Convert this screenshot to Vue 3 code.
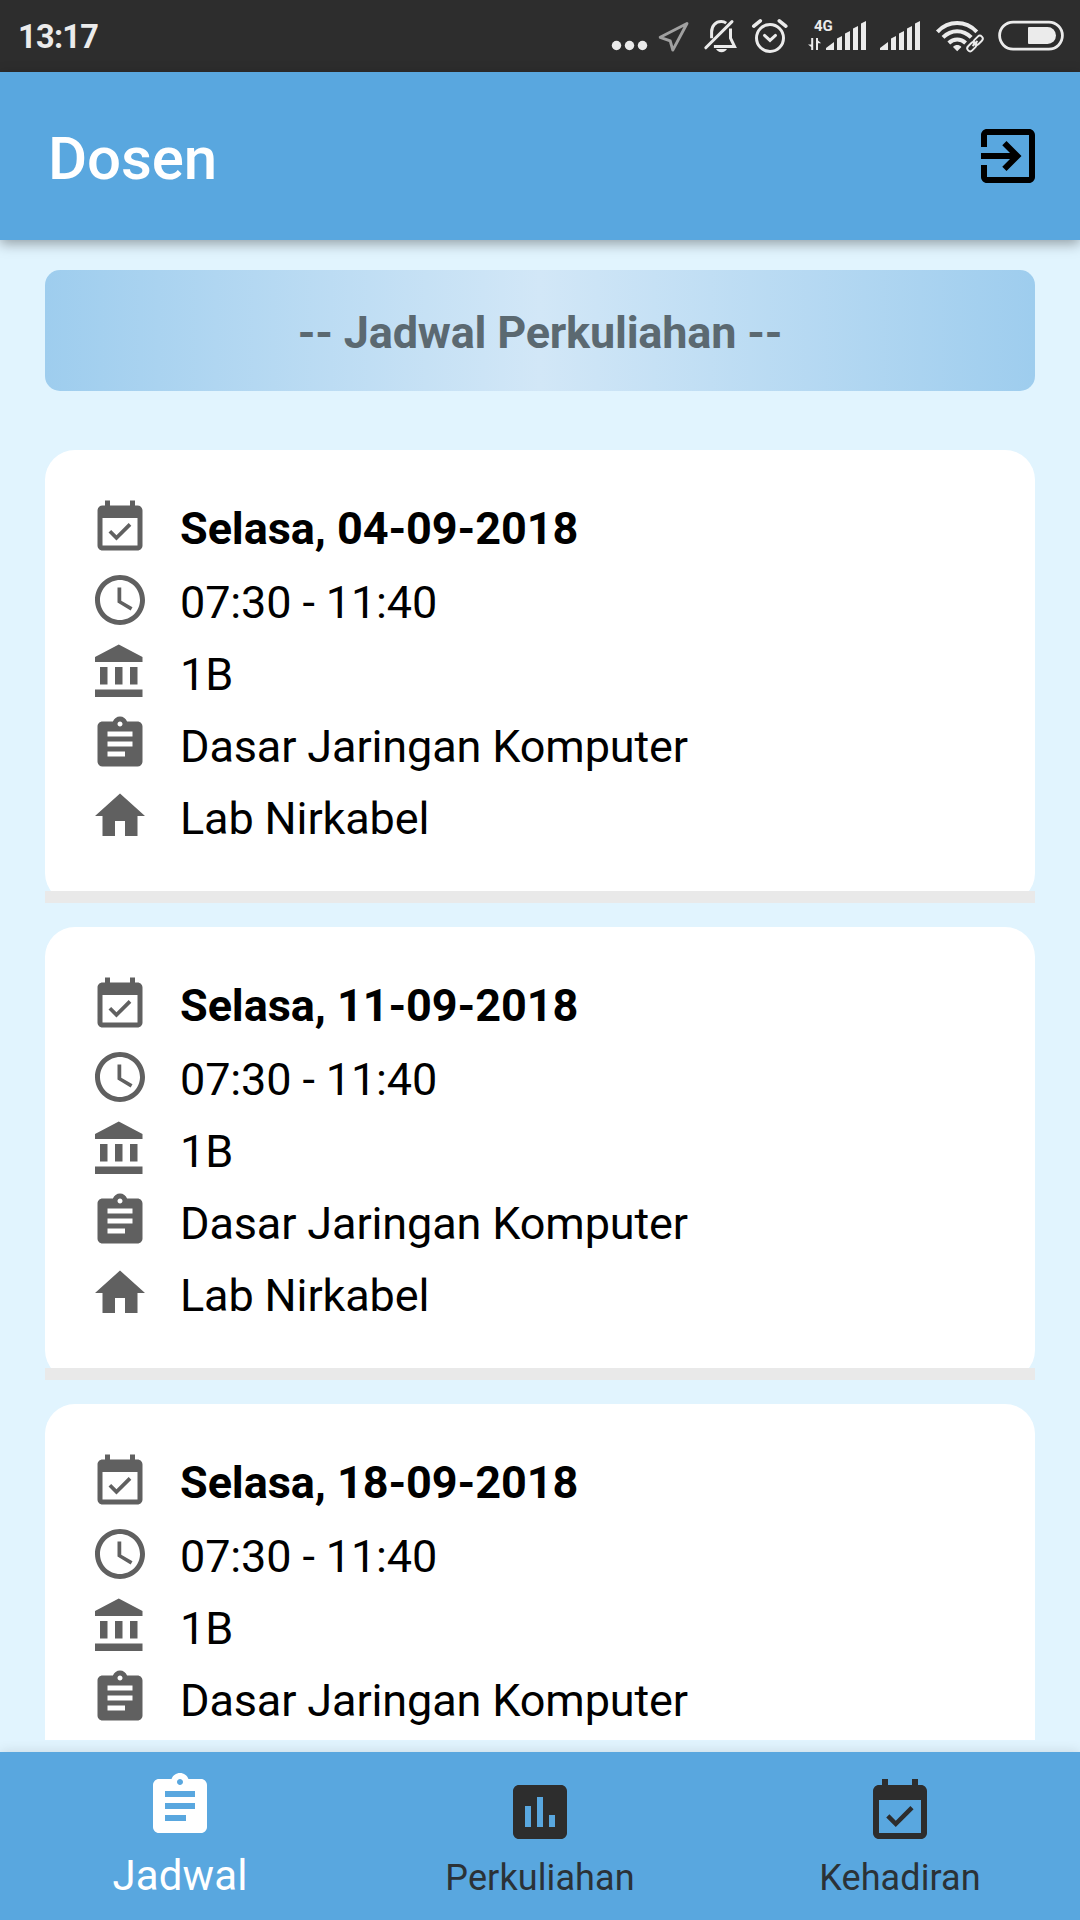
<script setup>
const icons = {
  calendar: 'M16.53 11.06L15.47 10l-4.88 4.88-2.12-2.12-1.06 1.06L10.59 17l5.94-5.94zM19 3h-1V1h-2v2H8V1H6v2H5c-1.11 0-1.99.9-1.99 2L3 19c0 1.1.89 2 2 2h14c1.1 0 2-.9 2-2V5c0-1.1-.9-2-2-2zm0 16H5V8h14v11z',
  clock: 'M11.99 2C6.47 2 2 6.48 2 12s4.47 10 9.99 10C17.52 22 22 17.52 22 12S17.52 2 11.99 2zM12 20c-4.42 0-8-3.58-8-8s3.58-8 8-8 8 3.58 8 8-3.58 8-8 8zm.5-13H11v6l5.25 3.15.75-1.23-4.5-2.67z',
  bank: 'M4 10v7h3v-7H4zm6 0v7h3v-7h-3zM2 22h19v-3H2v3zm14-12v7h3v-7h-3zm-4.5-9L2 6v2h19V6l-9.5-5z',
  clipboard: 'M19 3h-4.18C14.4 1.84 13.3 1 12 1c-1.3 0-2.4.84-2.82 2H5c-1.1 0-2 .9-2 2v14c0 1.1.9 2 2 2h14c1.1 0 2-.9 2-2V5c0-1.1-.9-2-2-2zm-7 0c.55 0 1 .45 1 1s-.45 1-1 1-1-.45-1-1 .45-1 1-1zm2 14H7v-2h7v2zm3-4H7v-2h10v2zm0-4H7V7h10v2z',
  home: 'M10 20v-6h4v6h5v-8h3L12 3 2 12h3v8z',
  chart: 'M19 3H5c-1.1 0-2 .9-2 2v14c0 1.1.9 2 2 2h14c1.1 0 2-.9 2-2V5c0-1.1-.9-2-2-2zM9 17H7v-7h2v7zm4 0h-2V7h2v10zm4 0h-2v-4h2v4z',
  exit: 'M10.09 15.59L11.5 17l5-5-5-5-1.41 1.41L12.67 11H3v2h9.67l-2.58 2.59zM19 3H5c-1.11 0-2 .9-2 2v4h2V5h14v14H5v-4H3v4c0 1.1.89 2 2 2h14c1.1 0 2-.9 2-2V5c0-1.1-.9-2-2-2z',
}

const schedule = ['04-09-2018', '11-09-2018', '18-09-2018'].map((date, index) => {
  const rows = [
    { icon: 'calendar', text: `Selasa, ${date}`, bold: true },
    { icon: 'clock', text: '07:30 - 11:40' },
    { icon: 'bank', text: '1B' },
    { icon: 'clipboard', text: 'Dasar Jaringan Komputer' },
  ]
  // The last row of the third card is below the fold.
  if (index < 2) rows.push({ icon: 'home', text: 'Lab Nirkabel' })
  return rows
})

const tabs = [
  { label: 'Jadwal', icon: 'clipboard', active: true },
  { label: 'Perkuliahan', icon: 'chart' },
  { label: 'Kehadiran', icon: 'calendar' },
]
</script>

<template>
  <div class="screen">
    <div class="status">
      <span class="time">13:17</span>
      <svg class="indicators" width="480" height="72" viewBox="600 0 480 72">
        <g fill="#ebebeb">
          <circle cx="616.5" cy="45.5" r="4.7" />
          <circle cx="629.5" cy="45.5" r="4.7" />
          <circle cx="642.5" cy="45.5" r="4.7" />
        </g>
        <path d="M687 23.500L660.200 37.3l10 3.600 2.600 9.200z" fill="none" stroke="#a0a0a0" stroke-width="2.900" stroke-linejoin="round" />
        <g fill="none" stroke="#ebebeb" stroke-width="3">
          <path d="M705.8 47.8L732 21.6" stroke-linecap="round" />
          <path d="M711.6 38.2v-6.2c0-6 4-10.400 9.600-10.400 2 0 3.600.5 5 1.500" />
          <path d="M730.5 28.6v9.600l4 8.200h-20.600" />
        </g>
        <path d="M716 49h11c-1 2-3 3.200-5.500 3.200S717 51 716 49z" fill="#ebebeb" />
        <g fill="none" stroke="#ebebeb" stroke-width="3" stroke-linecap="round">
          <circle cx="770" cy="38" r="13.500" />
          <path d="M764.5 35.400l5.500 5 5.500-5" />
          <path d="M753.8 26.200l6.500-5.400M785.8 26.200l-6.500-5.400" stroke-width="3.600" />
        </g>
        <text x="814" y="31" class="network">4G</text>
        <path d="M813.2 38v12h-2v-3l-3.200-2.600h3.200V38zM816 50V38h2v2.600l3.200 2.600H818V50z" fill="#ebebeb" />
        <g fill="#ebebeb">
          <path id="bars" d="M826 50v-2l8-6v8zM837 50V38.500l5-2.500v14zM845 50V33.500l5-2.500v19zM853 50V28.500l5-2.500v24zM861 50V23.500l5-2.500v29z" />
          <use href="#bars" x="54" />
        </g>
        <g fill="none" stroke="#ebebeb" stroke-width="4">
          <path d="M937.4 31.800c11.400-11.600 28-11.600 39.400 0" />
          <path d="M943 37.400c8.200-8.200 20-8.200 28.200 0" />
          <path d="M948.8 43c4.800-4.600 12-4.600 16.800 0" />
        </g>
        <path d="M957.2 51.200l-4.200-4.200c2.400-2.600 6-2.600 8.400 0z" fill="#ebebeb" />
        <path d="M970 48l10-9" fill="none" stroke="#2d2d2d" stroke-width="6" />
        <g fill="none" stroke="#ebebeb" stroke-width="1.900">
          <rect x="-5.200" y="-2.900" width="10.400" height="5.800" rx="2.900" transform="translate(978.2 40.300) rotate(-45)" />
          <rect x="-5.200" y="-2.900" width="10.400" height="5.800" rx="2.900" transform="translate(971.8 46.700) rotate(-45)" />
          <path d="M972.5 46l5-5" />
        </g>
        <rect x="999.600" y="22.100" width="62.800" height="27" rx="13.500" fill="none" stroke="#ebebeb" stroke-width="2.800" />
        <path d="M1029 27h18.500a8.500 8.500 0 0 1 0 17H1029a1 1 0 0 1-1-1V28a1 1 0 0 1 1-1z" fill="#ebebeb" />
      </svg>
    </div>

    <header class="header">
      <h1>Dosen</h1>
      <svg width="72" height="72" viewBox="0 0 24 24"><path :d="icons.exit" /></svg>
    </header>

    <main class="content">
      <div class="banner">-- Jadwal Perkuliahan --</div>
      <section v-for="(rows, i) in schedule" :key="i" class="card">
        <div v-for="row in rows" :key="row.icon" class="row" :class="{ bold: row.bold }">
          <svg width="60" height="60" viewBox="0 0 24 24"><path :d="icons[row.icon]" /></svg>
          <span>{{ row.text }}</span>
        </div>
        <div class="edge"></div>
      </section>
    </main>

    <nav class="tabs">
      <div v-for="tab in tabs" :key="tab.label" class="tab" :class="{ active: tab.active }">
        <svg width="72" height="72" viewBox="0 0 24 24"><path :d="icons[tab.icon]" /></svg>
        <span>{{ tab.label }}</span>
      </div>
    </nav>
  </div>
</template>

<style>
body {
  margin: 0;
  overflow: hidden;
}
</style>

<style scoped>
.screen {
  display: flex;
  flex-direction: column;
  width: 1080px;
  height: 1920px;
  overflow: hidden;
  background: #e1f4fe;
  font-family: Roboto, "Liberation Sans", sans-serif;
}
svg {
  display: block;
  flex: none;
}
.status {
  display: flex;
  flex: none;
  justify-content: space-between;
  height: 72px;
  background: #2d2d2d;
}
.time {
  margin-left: 18px;
  font-size: 32.5px;
  font-weight: 700;
  line-height: 74px;
  letter-spacing: -0.7px;
  color: #ebebeb;
}
.network {
  font-size: 15px;
  font-weight: 700;
  fill: #ebebeb;
}
.header {
  position: relative;
  display: flex;
  flex: none;
  justify-content: space-between;
  height: 168px;
  box-sizing: border-box;
  padding: 48px 36px 0 48px;
  background: #59a7df;
  box-shadow: 0 4px 12px rgba(0, 0, 0, 0.34);
}
h1 {
  margin: 0;
  font-size: 60px;
  font-weight: 500;
  line-height: 77px;
  letter-spacing: -0.1px;
  color: #fff;
}
.content {
  flex: none;
  height: 1500px;
  box-sizing: border-box;
  padding: 30px 45px 0;
  overflow: hidden;
}
.banner {
  height: 121px;
  margin-bottom: 59px;
  border-radius: 15px;
  background: linear-gradient(90deg, #9ecdee, #d2e7f7 50%, #9ecdee);
  color: #5b6971;
  font-size: 45px;
  font-weight: 700;
  line-height: 125px;
  letter-spacing: -0.2px;
  text-align: center;
}
.card {
  display: flex;
  flex-direction: column;
  height: 453px;
  box-sizing: border-box;
  margin-bottom: 24px;
  padding-top: 48px;
  border-radius: 30px;
  background: #fff;
}
.row {
  display: flex;
  flex: none;
  gap: 30px;
  height: 72px;
  padding-left: 45px;
  font-size: 45px;
  line-height: 65px;
  letter-spacing: -0.13px;
  white-space: nowrap;
  color: #000;
}
.row svg {
  fill: #606060;
}
.bold {
  font-weight: 700;
  letter-spacing: -0.07px;
}
.bold span {
  margin-top: -2px;
}
.edge {
  height: 12px;
  margin-top: auto;
  background: #e9e9e9;
}
.tabs {
  position: relative;
  display: flex;
  flex: none;
  height: 168px;
  margin-top: 12px;
  background: #59a7df;
  box-shadow: 0 0 12px rgba(0, 0, 0, 0.12);
}
.tab {
  display: flex;
  flex: 1;
  flex-direction: column;
  align-items: center;
  padding-top: 24px;
  font-size: 36px;
  line-height: 60px;
  letter-spacing: 0.1px;
  color: #2b3237;
  fill: #2d2d2d;
}
.active {
  padding-top: 18px;
  font-size: 42px;
  line-height: 68px;
  color: #fff;
  fill: #fff;
}
</style>
